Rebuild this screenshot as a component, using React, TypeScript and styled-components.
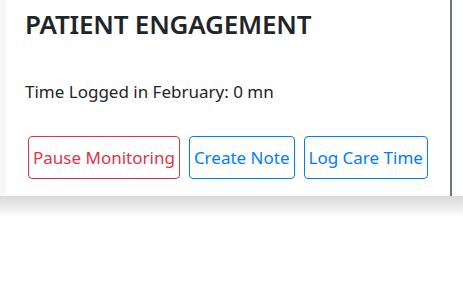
import React from 'react';
import styled, { createGlobalStyle } from 'styled-components';

const GlobalStyle = createGlobalStyle`
  html, body {
    margin: 0;
    padding: 0;
    background: #ffffff;
  }
  body {
    font-family: "Noto Sans", "Open Sans", sans-serif;
    color: #212529;
  }
`;

const Page = styled.div`
  display: flex;
  flex-direction: column;
  width: 463px;
  height: 291px;
  overflow: hidden;
`;

const Top = styled.div`
  display: flex;
  flex-direction: row;
  height: 196px;
`;

const Gutter = styled.div`
  width: 6px;
  background: #f6f7f9;
`;

const Panel = styled.section`
  width: 446px;
  box-sizing: border-box;
  border-right: 2px solid #6c757d;
  padding: 7px 0 0 19px;
  background: #ffffff;
`;

const Title = styled.h2`
  margin: 0;
  font-size: 26px;
  font-weight: 600;
  line-height: 34px;
  letter-spacing: -0.2px;
  color: #212529;
`;

const Logged = styled.p`
  margin: 38px 0 0;
  font-size: 17px;
  line-height: 26px;
  color: #212529;
`;

const Actions = styled.div`
  display: flex;
  flex-direction: row;
  gap: 9px;
  margin: 31px 0 0 3px;
`;

const Button = styled.button<{ $tone: 'danger' | 'primary' }>`
  box-sizing: border-box;
  height: 43px;
  padding: 0 4px;
  font-family: inherit;
  font-size: 17px;
  background: #ffffff;
  border-radius: 4px;
  border: 1px solid ${p => (p.$tone === 'danger' ? '#dc3545' : '#007bff')};
  color: ${p => (p.$tone === 'danger' ? '#dc3545' : '#007bff')};
  cursor: pointer;
`;

const Shade = styled.div`
  height: 22px;
  background: linear-gradient(180deg, #d9d9d9 0%, #efefef 60%, #ffffff 100%);
`;

const App: React.FC = () => (
  <Page>
    <GlobalStyle />
    <Top>
      <Gutter />
      <Panel>
        <Title>PATIENT ENGAGEMENT</Title>
        <Logged>Time Logged in February: 0 mn</Logged>
        <Actions>
          <Button $tone="danger">Pause Monitoring</Button>
          <Button $tone="primary">Create Note</Button>
          <Button $tone="primary">Log Care Time</Button>
        </Actions>
      </Panel>
    </Top>
    <Shade />
  </Page>
);

export default App;
